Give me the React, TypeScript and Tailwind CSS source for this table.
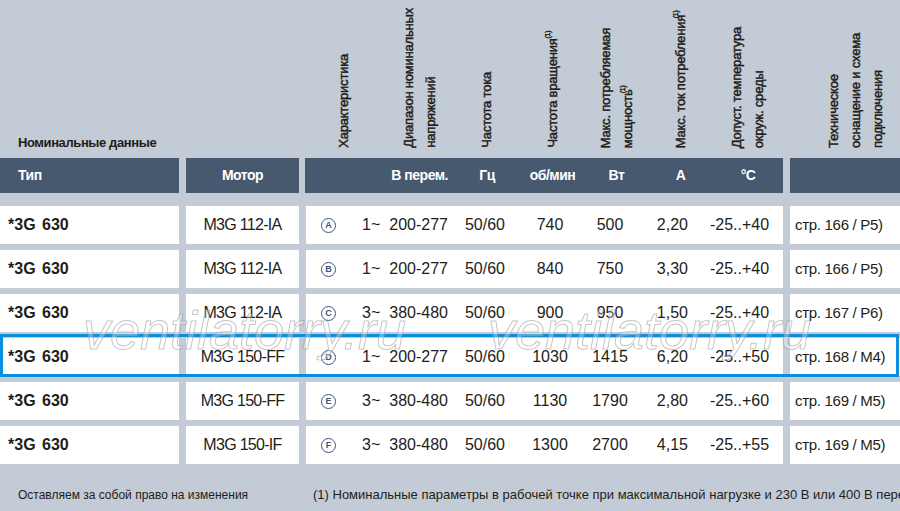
import React from "react";

const rows = [
  { motor: "M3G 112-IA", ch: "A", ph: "1~", volt: "200-277", rpm: "740", w: "500", a: "2,20", t: "-25..+40", ref: "стр. 166 / P5)" },
  { motor: "M3G 112-IA", ch: "B", ph: "1~", volt: "200-277", rpm: "840", w: "750", a: "3,30", t: "-25..+40", ref: "стр. 166 / P5)" },
  { motor: "M3G 112-IA", ch: "C", ph: "3~", volt: "380-480", rpm: "900", w: "950", a: "1,50", t: "-25..+40", ref: "стр. 167 / P6)" },
  { motor: "M3G 150-FF", ch: "D", ph: "1~", volt: "200-277", rpm: "1030", w: "1415", a: "6,20", t: "-25..+50", ref: "стр. 168 / M4)", active: true },
  { motor: "M3G 150-FF", ch: "E", ph: "3~", volt: "380-480", rpm: "1130", w: "1790", a: "2,80", t: "-25..+60", ref: "стр. 169 / M5)" },
  { motor: "M3G 150-IF", ch: "F", ph: "3~", volt: "380-480", rpm: "1300", w: "2700", a: "4,15", t: "-25..+55", ref: "стр. 169 / M5)" },
];

// rotated column titles, read bottom to top
const Vert = ({ children }: { children: React.ReactNode }) => (
  <div className="[writing-mode:vertical-rl] rotate-180 text-[13px] leading-[22px] whitespace-nowrap tracking-[-0.2px] [-webkit-text-stroke:0.45px_#231f20]">
    {children}
  </div>
);

const Sup = () => <sup className="text-[7px] align-super">(1)</sup>;

const Circle = ({ l }: { l: string }) => (
  <span className="w-[15px] h-[15px] rounded-full border border-[#3d5674] text-[#3d5674] text-[9px] font-bold flex items-center justify-center leading-none">
    {l}
  </span>
);

export default function App() {
  return (
    <div className="relative w-[900px] h-[511px] overflow-hidden bg-[#c3ccd6] text-[#231d17] font-['Liberation_Sans',Arial,sans-serif]">
      {/* column titles */}
      <div className="h-[158px] flex">
        <div className="w-[306px] flex items-end pl-[18px] pb-[7px]">
          <span className="text-[13px] leading-[16px] font-bold tracking-[-0.4px]">Номинальные данные</span>
        </div>
        <div className="w-[76px] flex items-end justify-center pb-[10px]">
          <Vert>Характеристика</Vert>
        </div>
        <div className="w-[72px] flex items-end justify-center pb-[10px] pl-[4px]">
          <Vert>
            Диапазон номинальных
            <br />
            напряжений
          </Vert>
        </div>
        <div className="w-[66px] flex items-end justify-center pb-[10px]">
          <Vert>Частота тока</Vert>
        </div>
        <div className="w-[65px] flex items-end justify-center pb-[10px]">
          <Vert>
            Частота вращения <Sup />
          </Vert>
        </div>
        <div className="w-[63px] flex items-end justify-center pb-[10px]">
          <Vert>
            Макс. потребляемая
            <br />
            мощность<Sup />
          </Vert>
        </div>
        <div className="w-[65px] flex items-end justify-center pb-[10px]">
          <Vert>
            Макс. ток потребления<Sup />
          </Vert>
        </div>
        <div className="w-[70px] flex items-end justify-center pb-[10px]">
          <Vert>
            Допуст. температура
            <br />
            окруж. среды
          </Vert>
        </div>
        <div className="w-[7px]" />
        <div className="w-[110px] flex items-end justify-center pb-[10px] pl-[22px]">
          <Vert>
            Техническое
            <br />
            оснащение и схема
            <br />
            подключения
          </Vert>
        </div>
      </div>

      {/* units bar */}
      <div className="h-[35px] flex gap-[7px] text-white font-bold text-[14px] tracking-[-0.5px]">
        <div className="w-[179px] bg-[#46596e] flex items-center pl-[18px]">Тип</div>
        <div className="w-[113px] bg-[#46596e] flex items-center justify-center">Мотор</div>
        <div className="w-[478px] -ml-[1px] bg-[#46596e] flex items-center">
          <div className="w-[77px]" />
          <div className="w-[72px] text-right pr-[6px]">В перем.</div>
          <div className="w-[66px] text-center">Гц</div>
          <div className="w-[65px] text-center">об/мин</div>
          <div className="w-[63px] text-center">Вт</div>
          <div className="w-[65px] text-center">А</div>
          <div className="w-[70px] text-center">°C</div>
        </div>
        <div className="flex-1 bg-[#46596e]" />
      </div>

      {/* data */}
      <div className="mt-[13px] flex flex-col gap-[6px] text-[16px]">
        {rows.map((r) => (
          <div key={r.ch} className="relative h-[38px] flex gap-[7px]">
            <div className="w-[179px] bg-white flex items-center pl-[8px] font-bold [word-spacing:2px]">
              *3G 630
            </div>
            <div className="w-[113px] bg-white flex items-center justify-center tracking-[-0.7px]">
              {r.motor}
            </div>
            <div className="w-[477px] bg-white flex items-center">
              <div className="w-[46px] pl-[15px]">
                <Circle l={r.ch} />
              </div>
              <div className="w-[104px] flex justify-between pl-[10px] pr-[8px]">
                <span>{r.ph}</span>
                <span>{r.volt}</span>
              </div>
              <div className="w-[58px] text-center">50/60</div>
              <div className="w-[72px] text-center">{r.rpm}</div>
              <div className="w-[48px] text-center">{r.w}</div>
              <div className="w-[62px] text-right pr-[8px]">{r.a}</div>
              <div className="w-[87px] text-center">{r.t}</div>
            </div>
            <div className="flex-1 bg-white flex items-center pl-[5px] text-[15px] tracking-[-0.3px]">{r.ref}</div>
            {r.active && (
              <div className="absolute left-0 right-[1px] -top-[4px] -bottom-[1px] border-[3px] border-[#0b8de0]" />
            )}
          </div>
        ))}
      </div>

      {/* notes */}
      <div className="mt-[23px] flex leading-[16px] whitespace-nowrap">
        <div className="w-[313px] shrink-0 pl-[18px] text-[12px]">Оставляем за собой право на изменения</div>
        <div className="text-[13px]">
          (1) Номинальные параметры в рабочей точке при максимальной нагрузке и 230 В или 400 В перем. тока
        </div>
      </div>

      {/* watermark */}
      <div className="absolute left-[83px] top-[303px] text-[54px] leading-none italic text-white/30 [-webkit-text-stroke:1px_rgba(150,150,150,0.55)] pointer-events-none">
        ventilatorry.ru
      </div>
      <div className="absolute left-[488px] top-[303px] text-[54px] leading-none italic text-white/30 [-webkit-text-stroke:1px_rgba(150,150,150,0.55)] pointer-events-none">
        ventilatorry.ru
      </div>
    </div>
  );
}
